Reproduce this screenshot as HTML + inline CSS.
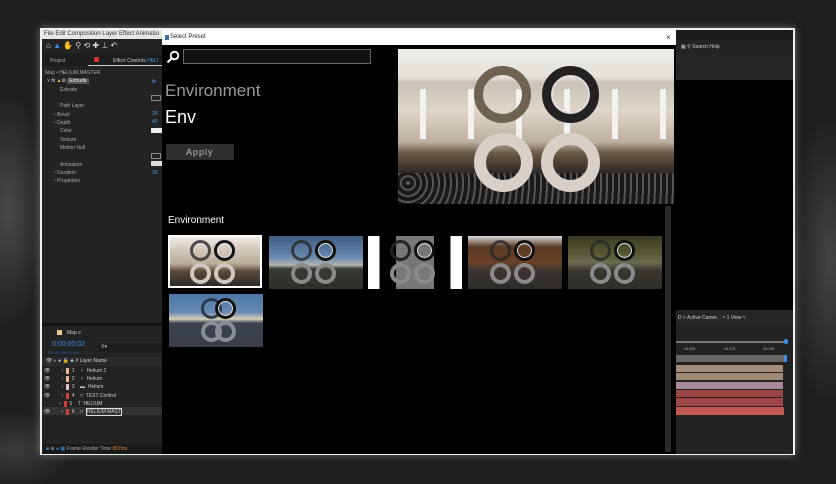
<!DOCTYPE html>
<html><head><meta charset="utf-8"><style>
*{margin:0;padding:0;box-sizing:border-box}
body{width:836px;height:484px;overflow:hidden;background:#222;font-family:"Liberation Sans",sans-serif;position:relative}
.bg{position:absolute;inset:0;background:
radial-gradient(ellipse 40px 120px at 8px 210px,#4a4a4a,transparent),
radial-gradient(ellipse 60px 40px at 15px 450px,#3c3c3c,transparent),
radial-gradient(ellipse 40px 150px at 830px 260px,#444,transparent),
#1e1e1e}
.a{position:absolute}
.screen{left:40px;top:28px;width:755px;height:427px;border:2px solid #f0f0f0;background:#1a1a1a;box-shadow:0 0 8px rgba(255,255,255,.35)}
.t{position:absolute;font-size:5px;color:#aaa;white-space:nowrap}
.ring{position:absolute;border-radius:50%}
.thumb{position:absolute;width:94px;height:53px;overflow:hidden}
</style></head><body>
<div class="bg"></div>
<div class="a screen"></div>
<div class="a" style="left:42px;top:30px;width:120px;height:9px;background:#e6e6e6"></div>
<div class="t" style="left:44px;top:31px;color:#333;font-size:6px">File Edit Composition Layer Effect Animatio</div>
<div class="a" style="left:42px;top:39px;width:120px;height:14px;background:#232323"></div>
<div class="t" style="left:46px;top:41px;color:#ddd;font-size:8px">⌂ <span style="color:#3a8fe0">▲</span> ✋ ⚲ ⟲ ✚ ⊥ ↶</div>
<div class="a" style="left:42px;top:53px;width:120px;height:270px;background:#232323"></div>
<div class="a" style="left:42px;top:54px;width:120px;height:12px;background:#1d1d1d"></div>
<div class="t" style="left:50px;top:58px">Project</div>
<div class="a" style="left:94px;top:57px;width:5px;height:5px;background:#c33"></div>
<div class="t" style="left:113px;top:58px;color:#ccc">Effect Controls <span style="color:#4a9ee8">HELI</span></div>
<div class="a" style="left:88px;top:65px;width:74px;height:1px;background:#ccc"></div>
<div class="t" style="left:45px;top:70px">Map • HELIUM MASTER</div>
<div class="t" style="left:47px;top:78px;color:#ddd">˅ <i>fx</i> <span style="color:#e8c030">▲</span>⚙ <span style="background:#555;color:#eee;padding:0 2px">Extrude</span></div>
<div class="t" style="left:60px;top:87px">Extrude</div>
<div class="t" style="left:60px;top:103px">Path Layer</div>
<div class="t" style="left:54px;top:112px">›  Bevel</div>
<div class="t" style="left:54px;top:120px">›  Depth</div>
<div class="t" style="left:60px;top:128px">Color</div>
<div class="t" style="left:60px;top:137px">Texture</div>
<div class="t" style="left:60px;top:145px">Motion Null</div>
<div class="t" style="left:60px;top:162px">Animation</div>
<div class="t" style="left:54px;top:170px">›  Duration</div>
<div class="t" style="left:54px;top:178px">›  Properties</div>
<div class="t" style="left:152px;top:79px;color:#4a9ee8">fe</div>
<div class="a" style="left:151px;top:95px;width:10px;height:6px;border:1px solid #888"></div>
<div class="t" style="left:152px;top:111px;color:#4a9ee8">20</div>
<div class="t" style="left:152px;top:119px;color:#4a9ee8">40</div>
<div class="a" style="left:151px;top:128px;width:11px;height:5px;background:#eee"></div>
<div class="a" style="left:151px;top:153px;width:10px;height:6px;border:1px solid #888"></div>
<div class="a" style="left:151px;top:161px;width:11px;height:5px;background:#ddd"></div>
<div class="t" style="left:152px;top:170px;color:#4a9ee8">10</div>
<div class="a" style="left:42px;top:323px;width:120px;height:3px;background:#111"></div>
<div class="a" style="left:42px;top:326px;width:120px;height:118px;background:#232323"></div>
<div class="a" style="left:57px;top:330px;width:5px;height:5px;background:#e8c890"></div>
<div class="t" style="left:67px;top:330px;color:#ccc">Map  ≡</div>
<div class="t" style="left:52px;top:341px;color:#3a8fe0;font-size:7px">0:00:00:02</div>
<div class="t" style="left:48px;top:350px;color:#2a5fa0;font-size:4px">00002 (25.00 fps)</div>
<div class="a" style="left:98px;top:343px;width:64px;height:9px;background:#1c1c1c"></div>
<div class="t" style="left:101px;top:344px;color:#ccc">⚲▾</div>
<div class="a" style="left:42px;top:357px;width:120px;height:9px;background:#2a2a2a"></div>
<div class="t" style="left:46px;top:358px;color:#ccc">👁 ◐ ● 🔒    ◈  #    Layer Name</div>
<div class="a" style="left:42px;top:407px;width:120px;height:8px;background:#333"></div>
<div style="position:absolute;left:44px;top:367px;font-size:5px;color:#ccc;line-height:8.2px;white-space:pre">👁        ›  <span style="background:#e8b898;color:#e8b898">■</span>  1    ♀  Helium 2
👁        ›  <span style="background:#e8b898;color:#e8b898">■</span>  2    ♀  Helium
👁        ›  <span style="background:#e0c0d0;color:#e0c0d0">■</span>  3    ▬  Helium
👁        ›  <span style="background:#d04040;color:#d04040">■</span>  4    □  TEXT Control
           ›  <span style="background:#d04040;color:#d04040">■</span>  5    T  HELIUM
👁        ›  <span style="background:#d04040;color:#d04040">■</span>  6    □  <span style="border:1px solid #ddd">HELIUM MAST</span></div>
<div class="a" style="left:42px;top:444px;width:120px;height:10px;background:#1a1a1a"></div>
<div class="t" style="left:46px;top:446px;color:#3a8fe0">■ <span style="color:#aaa">⊕</span> ● ▦ <span style="color:#aaa">Frame Render Time</span> <span style="color:#e08a30">957ms</span></div>
<div class="a" style="left:676px;top:30px;width:117px;height:10px;background:#1a1a1a"></div>
<div class="a" style="left:676px;top:40px;width:117px;height:14px;background:#232323"></div>
<div class="t" style="left:681px;top:44px;color:#ccc">▦  ⚲  Search Help</div>
<div class="a" style="left:676px;top:54px;width:117px;height:26px;background:#262626"></div>
<div class="a" style="left:676px;top:80px;width:117px;height:230px;background:#000"></div>
<div class="a" style="left:676px;top:310px;width:117px;height:14px;background:#262626"></div>
<div class="t" style="left:678px;top:315px;color:#ccc">D  ˅   Active Camer...  ˅   1 View  ˅</div>
<div class="a" style="left:676px;top:324px;width:117px;height:130px;background:#232323"></div>
<div class="a" style="left:676px;top:341px;width:110px;height:2px;background:#777"></div>
<div class="a" style="left:784px;top:339px;width:4px;height:5px;border-radius:2px;background:#3a8fe0"></div>
<div class="t" style="left:684px;top:346px;font-size:4px">04:00f</div>
<div class="t" style="left:724px;top:346px;font-size:4px">04:12f</div>
<div class="t" style="left:763px;top:346px;font-size:4px">05:00f</div>
<div class="a" style="left:676px;top:355px;width:108px;height:7px;background:#666"></div>
<div class="a" style="left:784px;top:355px;width:3px;height:7px;background:#3a8fe0"></div>
<div class="a" style="left:676px;top:365px;width:107px;height:7px;background:#a38c7a"></div>
<div class="a" style="left:676px;top:373px;width:107px;height:7px;background:#a08a76"></div>
<div class="a" style="left:676px;top:382px;width:107px;height:7px;background:#a78a98"></div>
<div class="a" style="left:676px;top:390px;width:107px;height:7px;background:#9c4444"></div>
<div class="a" style="left:676px;top:398px;width:107px;height:8px;background:#a04646"></div>
<div class="a" style="left:676px;top:407px;width:108px;height:8px;background:#c05752"></div>
<div class="a" style="left:162px;top:30px;width:514px;height:424px;background:#000"></div>
<div class="a" style="left:162px;top:30px;width:514px;height:15px;background:#fff"></div>
<div class="a" style="left:165px;top:35px;width:4px;height:5px;background:#3a6ea8"></div>
<div class="t" style="left:170px;top:34px;color:#222;font-size:6px">Select Preset</div>
<div class="t" style="left:666px;top:33px;color:#333;font-size:8px">×</div>
<svg class="a" style="left:166px;top:50px" width="14" height="14" viewBox="0 0 14 14"><circle cx="8.5" cy="5.5" r="3.8" fill="none" stroke="#fff" stroke-width="1.8"/><line x1="5.8" y1="8.3" x2="1.5" y2="12.5" stroke="#fff" stroke-width="2"/></svg>
<div class="a" style="left:183px;top:49px;width:188px;height:15px;border:1px solid #666;background:#111"></div>
<div class="t" style="left:165px;top:81px;font-size:17px;color:#9a9a9a">Environment</div>
<div class="t" style="left:165px;top:107px;font-size:18px;color:#fff">Env</div>
<div class="a" style="left:166px;top:144px;width:68px;height:16px;background:#2e2e2e"></div>
<div class="t" style="left:186px;top:147px;font-size:9px;color:#bbb;letter-spacing:1px">Apply</div>
<div class="a" style="left:398px;top:49px;width:276px;height:155px;overflow:hidden;background:linear-gradient(#f0eeea 0%,#e4e0da 18%,#c8c2b8 22%,#ddd6ca 40%,#bcb0a0 60%,#6a5a48 67%,#4a3e32 74%,#2a2a2a 80%,#1e1e1e 100%)">
  <div class="a" style="left:0;top:40px;width:276px;height:50px;background:repeating-linear-gradient(90deg,transparent 0 22px,#f4f2ee 22px 28px,transparent 28px 48px)"></div>
  <div class="a" style="left:0;top:124px;width:276px;height:31px;background:repeating-radial-gradient(circle at 10px 10px,#555 0 2px,#1a1a1a 2px 6px)"></div>
  <div class="ring" style="left:76px;top:17px;width:57px;height:57px;border:9px solid #6e6252"></div>
  <div class="ring" style="left:144px;top:17px;width:57px;height:57px;border:9px solid #222;box-shadow:inset 0 0 0 2px #ddd"></div>
  <div class="ring" style="left:76px;top:84px;width:59px;height:59px;border:12px solid #d8d0c8"></div>
  <div class="ring" style="left:143px;top:84px;width:59px;height:59px;border:12px solid #d8d0c8"></div>
</div>
<div class="a" style="left:665px;top:206px;width:6px;height:246px;background:#2a2a2a"></div>
<div class="t" style="left:168px;top:215px;font-size:10px;color:#fff">Environment</div>
<div class="thumb" style="left:168px;top:235px;border:2px solid #fff;background:linear-gradient(#f0ece6 0%,#d8d0c4 20%,#b8ab98 55%,#5a4a3a 70%,#2a2a2a 100%)"></div>
<div class="thumb" style="left:269px;top:236px;background:linear-gradient(#3e5a80 0%,#6a8ab0 40%,#b0b4b0 55%,#3a3a34 62%,#2e2e2a 100%)"></div>
<div class="thumb" style="left:368px;top:236px;background:linear-gradient(90deg,#fff 0 12%,#000 12% 30%,#777 30% 70%,#000 70% 88%,#fff 88%)"></div>
<div class="thumb" style="left:468px;top:236px;background:linear-gradient(#ddd 0%,#5a3a24 20%,#6a4028 50%,#3a3430 65%,#2e2c2a 100%)"></div>
<div class="thumb" style="left:568px;top:236px;background:linear-gradient(#3a3a20 0%,#5a5a38 35%,#6a6a50 50%,#3a3630 65%,#302e2a 100%)"></div>
<div class="thumb" style="left:169px;top:294px;background:linear-gradient(#4a78a8 0%,#6a8ab0 35%,#d8d0b8 47%,#3c4250 55%,#3a3e48 100%)"></div>
<div id="rings"></div>
<script>
var xs=[[190,214],[291,315],[390,414],[490,514],[590,614]];
var h='';
function r(x,y,c,w,s){h+='<div class="ring" style="left:'+x+'px;top:'+y+'px;width:21px;height:21px;border:'+w+'px solid '+c+';'+(s||'')+'"></div>';}
xs.forEach(function(p,i){var y=240;
 r(p[0],y,i==2?'#222':'rgba(40,40,40,.8)',3);
 r(p[1],y,'#111',3,'box-shadow:inset 0 0 0 1px #eee');
 r(p[0],y+23,i==0?'#d0c8c0':'#8a8a8a',4);
 r(p[1],y+23,i==0?'#d0c8c0':'#8a8a8a',4);});
r(201,298,'rgba(40,50,70,.9)',3);r(215,298,'#111',3,'box-shadow:inset 0 0 0 1px #eee');
r(201,321,'#8a8e94',4);r(215,321,'#8a8e94',4);
document.getElementById('rings').innerHTML=h;
</script>
</body></html>
